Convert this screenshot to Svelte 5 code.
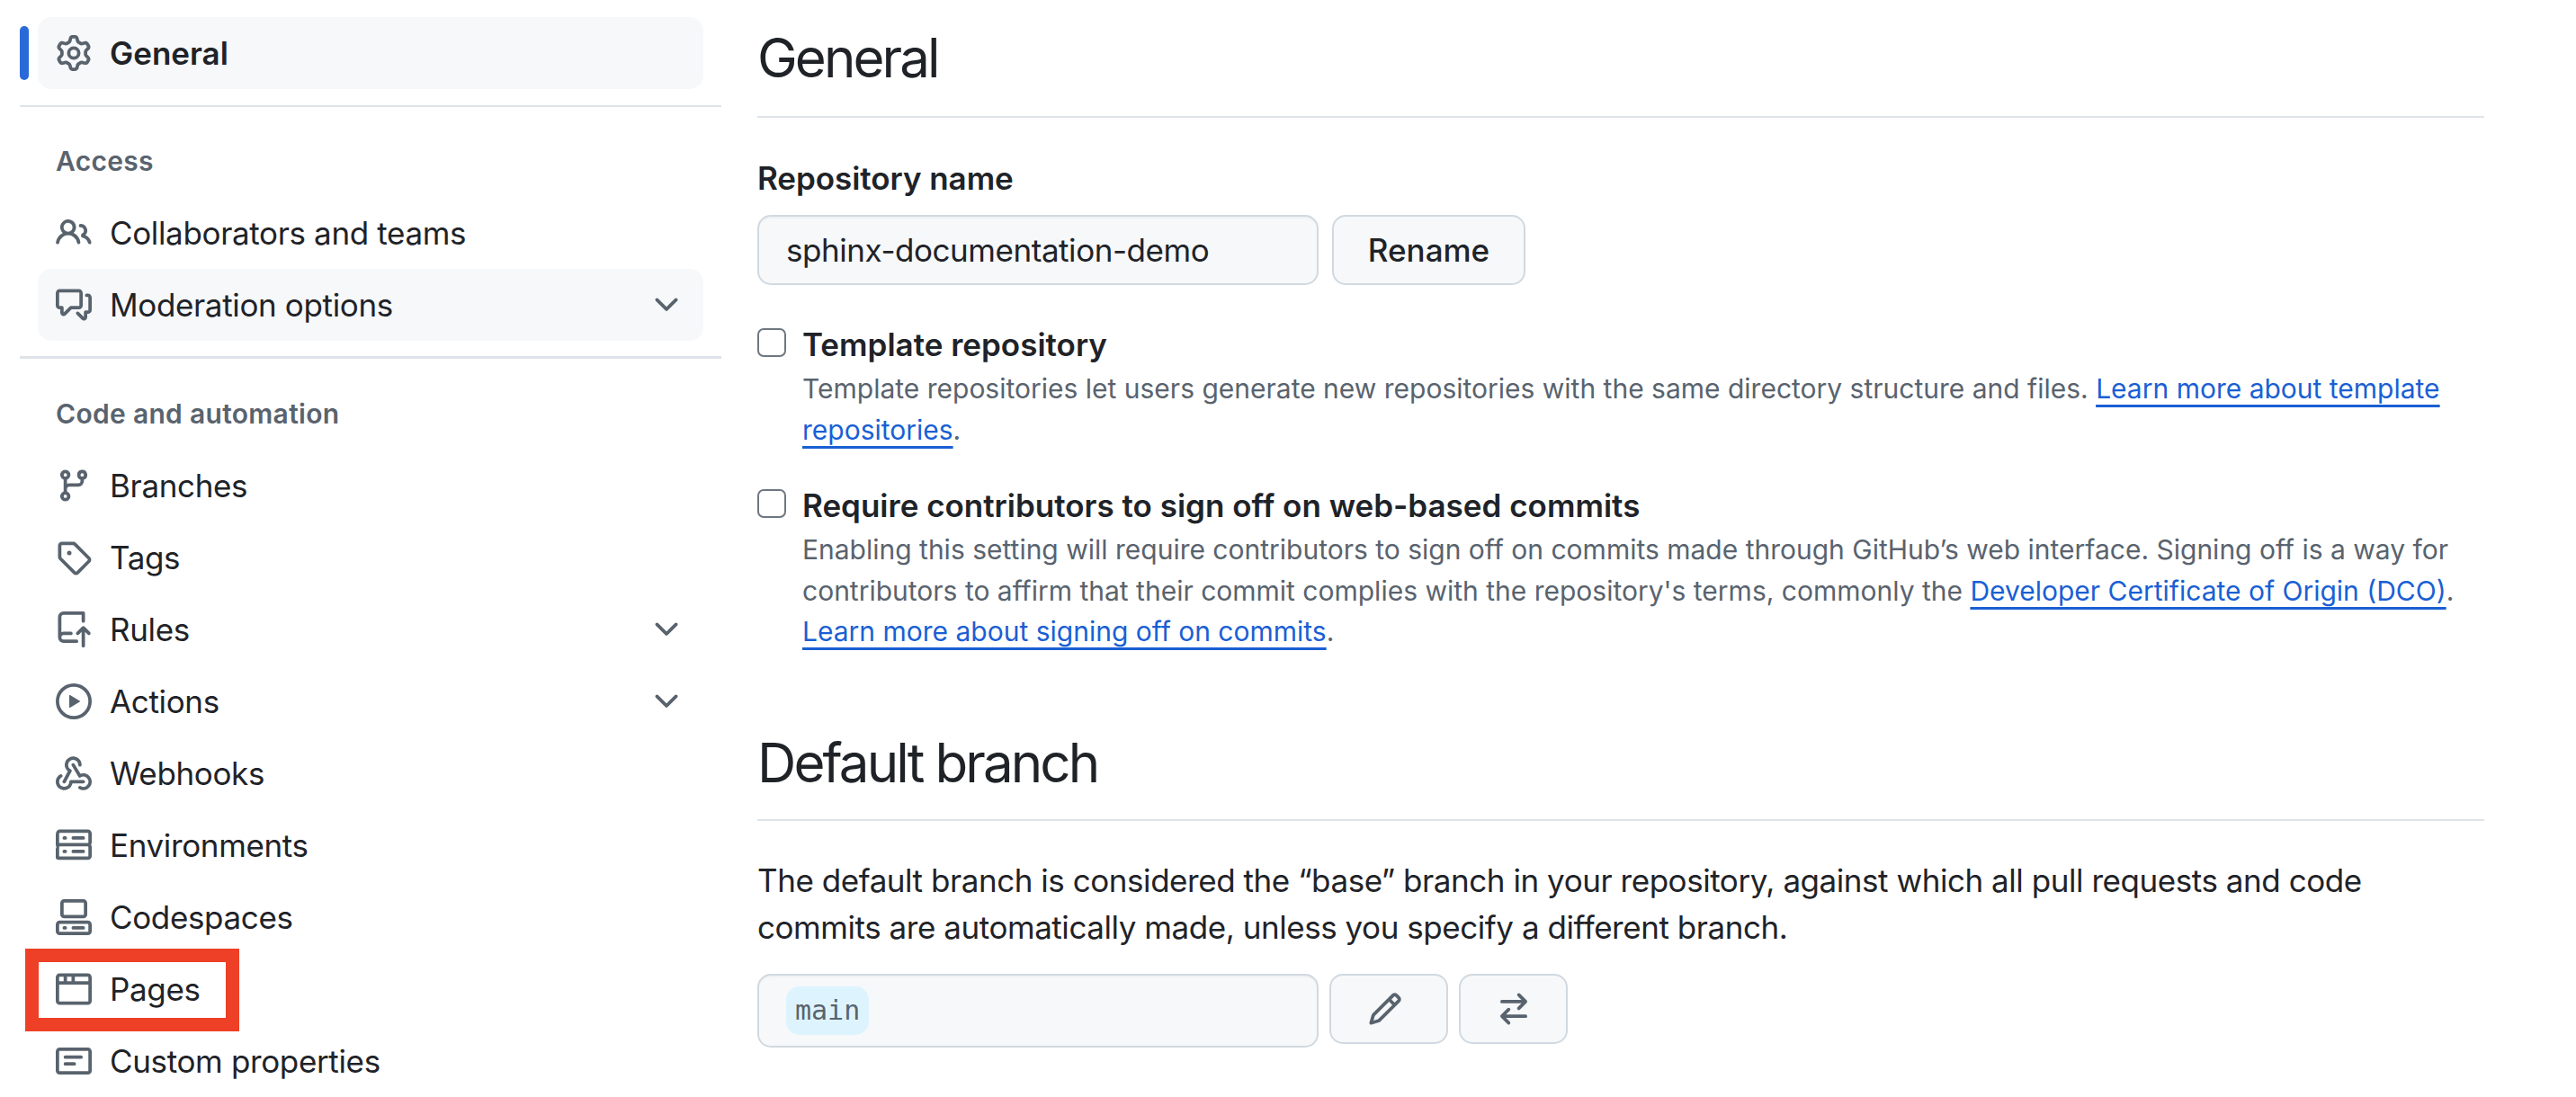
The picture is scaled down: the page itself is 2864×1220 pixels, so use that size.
<script lang="ts">
	const icons: Record<string, string> = {
		gear: 'M8 0a8.2 8.2 0 0 1 .701.031C9.444.095 9.99.645 10.16 1.29l.288 1.107c.018.066.079.158.212.224.231.114.454.243.668.386.123.082.233.09.299.071l1.103-.303c.644-.176 1.392.021 1.82.63.27.385.506.792.704 1.218.315.675.111 1.422-.364 1.891l-.814.806c-.049.048-.098.147-.088.294.016.257.016.515 0 .772-.01.147.038.246.088.294l.814.806c.475.469.679 1.216.364 1.891a7.977 7.977 0 0 1-.704 1.217c-.428.61-1.176.807-1.82.63l-1.102-.302c-.067-.019-.177-.011-.3.071a5.909 5.909 0 0 1-.668.386c-.133.066-.194.158-.211.224l-.29 1.106c-.168.646-.715 1.196-1.458 1.26a8.006 8.006 0 0 1-1.402 0c-.743-.064-1.289-.614-1.458-1.26l-.289-1.106c-.018-.066-.079-.158-.212-.224a5.738 5.738 0 0 1-.668-.386c-.123-.082-.233-.09-.299-.071l-1.103.303c-.644.176-1.392-.021-1.82-.63a8.12 8.12 0 0 1-.704-1.218c-.315-.675-.111-1.422.363-1.891l.815-.806c.05-.048.098-.147.088-.294a6.214 6.214 0 0 1 0-.772c.01-.147-.038-.246-.088-.294l-.815-.806C.635 6.045.431 5.298.746 4.623a7.92 7.92 0 0 1 .704-1.217c.428-.61 1.176-.807 1.82-.63l1.102.302c.067.019.177.011.3-.071.214-.143.437-.272.668-.386.133-.066.194-.158.211-.224l.29-1.106C6.009.645 6.556.095 7.299.03 7.53.01 7.764 0 8 0Zm-.571 1.525c-.036.003-.108.036-.137.146l-.289 1.105c-.147.561-.549.967-.998 1.189-.173.086-.34.183-.5.29-.417.278-.97.423-1.529.27l-1.103-.303c-.109-.03-.175.016-.195.045-.22.312-.412.644-.573.99-.014.031-.021.11.059.19l.815.806c.411.406.562.957.53 1.456a4.709 4.709 0 0 0 0 .582c.032.499-.119 1.05-.53 1.456l-.815.806c-.081.08-.073.159-.059.19.162.346.353.677.573.989.02.03.085.076.195.046l1.102-.303c.56-.153 1.113-.008 1.53.27.161.107.328.204.501.29.447.222.85.629.997 1.189l.289 1.105c.029.109.101.143.137.146a6.6 6.6 0 0 0 1.142 0c.036-.003.108-.036.137-.146l.289-1.105c.147-.561.549-.967.998-1.189.173-.086.34-.183.5-.29.417-.278.97-.423 1.529-.27l1.103.303c.109.029.175-.016.195-.045.22-.313.411-.644.573-.99.014-.031.021-.11-.059-.19l-.815-.806c-.411-.406-.562-.957-.53-1.456a4.709 4.709 0 0 0 0-.582c-.032-.499.119-1.05.53-1.456l.815-.806c.081-.08.073-.159.059-.19a6.464 6.464 0 0 0-.573-.989c-.02-.03-.085-.076-.195-.046l-1.102.303c-.56.153-1.113.008-1.53-.27a4.44 4.44 0 0 0-.501-.29c-.447-.222-.85-.629-.997-1.189l-.289-1.105c-.029-.11-.101-.143-.137-.146a6.6 6.6 0 0 0-1.142 0ZM11 8a3 3 0 1 1-6 0 3 3 0 0 1 6 0ZM9.5 8a1.5 1.5 0 1 0-3.001.001A1.5 1.5 0 0 0 9.5 8Z',
		people: 'M2 5.5a3.5 3.5 0 1 1 5.898 2.549 5.508 5.508 0 0 1 3.034 4.084.75.75 0 1 1-1.482.235 4 4 0 0 0-7.9 0 .75.75 0 0 1-1.482-.236A5.507 5.507 0 0 1 3.102 8.05 3.493 3.493 0 0 1 2 5.5ZM11 4a3.001 3.001 0 0 1 2.22 5.018 5.01 5.01 0 0 1 2.56 3.012.749.749 0 0 1-.885.954.752.752 0 0 1-.549-.514 3.507 3.507 0 0 0-2.522-2.372.75.75 0 0 1-.574-.73v-.352a.75.75 0 0 1 .416-.672A1.5 1.5 0 0 0 11 5.5.75.75 0 0 1 11 4Zm-5.5-.5a2 2 0 1 0-.001 3.999A2 2 0 0 0 5.5 3.5Z',
		comments: 'M1.75 1h8.5c.966 0 1.75.784 1.75 1.75v5.5A1.75 1.75 0 0 1 10.25 10H7.061l-2.574 2.573A1.458 1.458 0 0 1 2 11.543V10h-.25A1.75 1.75 0 0 1 0 8.25v-5.5C0 1.784.784 1 1.75 1ZM1.5 2.75v5.5c0 .138.112.25.25.25h1a.75.75 0 0 1 .75.75v2.19l2.72-2.72a.749.749 0 0 1 .53-.22h3.5a.25.25 0 0 0 .25-.25v-5.5a.25.25 0 0 0-.25-.25h-8.5a.25.25 0 0 0-.25.25Zm13 2a.25.25 0 0 0-.25-.25h-.5a.75.75 0 0 1 0-1.5h.5c.966 0 1.75.784 1.75 1.75v5.5A1.75 1.75 0 0 1 14.25 12H14v1.543a1.458 1.458 0 0 1-2.487 1.03L9.22 12.28a.749.749 0 0 1 .326-1.275.749.749 0 0 1 .734.215l2.22 2.22v-2.19a.75.75 0 0 1 .75-.75h1a.25.25 0 0 0 .25-.25Z',
		branch: 'M9.5 3.25a2.25 2.25 0 1 1 3 2.122V6A2.5 2.5 0 0 1 10 8.5H6a1 1 0 0 0-1 1v1.128a2.251 2.251 0 1 1-1.5 0V5.372a2.25 2.25 0 1 1 1.5 0v1.836A2.493 2.493 0 0 1 6 7h4a1 1 0 0 0 1-1v-.628A2.25 2.25 0 0 1 9.5 3.25Zm-6 0a.75.75 0 1 0 1.5 0 .75.75 0 0 0-1.5 0Zm8.25-.75a.75.75 0 1 0 0 1.5.75.75 0 0 0 0-1.5ZM4.25 12a.75.75 0 1 0 0 1.5.75.75 0 0 0 0-1.5Z',
		tag: 'M1 7.775V2.75C1 1.784 1.784 1 2.75 1h5.025c.464 0 .91.184 1.238.513l6.25 6.25a1.75 1.75 0 0 1 0 2.474l-5.026 5.026a1.75 1.75 0 0 1-2.474 0l-6.25-6.25A1.752 1.752 0 0 1 1 7.775Zm1.5 0c0 .066.026.13.073.177l6.25 6.25a.25.25 0 0 0 .354 0l5.025-5.025a.25.25 0 0 0 0-.354l-6.25-6.25a.25.25 0 0 0-.177-.073H2.75a.25.25 0 0 0-.25.25ZM6 5a1 1 0 1 1 0 2 1 1 0 0 1 0-2Z',
		push: 'M1 2.5A2.5 2.5 0 0 1 3.5 0h8.75a.75.75 0 0 1 .75.75v3.5a.75.75 0 0 1-1.5 0V1.5h-8a1 1 0 0 0-1 1v6.708A2.493 2.493 0 0 1 3.5 9h3.25a.75.75 0 0 1 0 1.5H3.5a1 1 0 0 0 0 2h5.75a.75.75 0 0 1 0 1.5H3.5A2.5 2.5 0 0 1 1 11.5Zm13.23 7.79h-.001l-1.224-1.224v6.184a.75.75 0 0 1-1.5 0V9.066L10.28 10.29a.75.75 0 0 1-1.06-1.061l2.505-2.504a.75.75 0 0 1 1.06 0L15.29 9.23a.751.751 0 0 1-.018 1.042.751.751 0 0 1-1.042.018Z',
		play: 'M8 0a8 8 0 1 1 0 16A8 8 0 0 1 8 0ZM1.5 8a6.5 6.5 0 1 0 13 0 6.5 6.5 0 0 0-13 0Zm4.879-2.773 4.264 2.559a.25.25 0 0 1 0 .428l-4.264 2.559A.25.25 0 0 1 6 10.559V5.442a.25.25 0 0 1 .379-.215Z',
		webhook: 'M5.5 4.25a2.25 2.25 0 0 1 4.5 0 .75.75 0 0 0 1.5 0 3.75 3.75 0 1 0-6.14 2.889l-2.272 4.258a.75.75 0 0 0 1.324.706L7 7.25a.75.75 0 0 0-.309-1.016A2.25 2.25 0 0 1 5.5 4.25ZM7.364 3.607a.75.75 0 0 1 1.03.257l2.608 4.349a3.75 3.75 0 1 1-.628 6.785.75.75 0 0 1 .752-1.299 2.25 2.25 0 1 0-.033-3.88.75.75 0 0 1-1.03-.256L7.107 4.636a.75.75 0 0 1 .257-1.03ZM2.9 8.776A.75.75 0 0 1 2.625 9.8 2.25 2.25 0 1 0 6 11.75a.75.75 0 0 1 .75-.751h5.5a.75.75 0 0 1 0 1.5H7.425a3.751 3.751 0 1 1-5.55-3.998.75.75 0 0 1 1.024.274Z',
		server: 'M1.75 1h12.5c.966 0 1.75.784 1.75 1.75v4c0 .372-.116.717-.314 1 .198.283.314.628.314 1v4a1.75 1.75 0 0 1-1.75 1.75H1.75A1.75 1.75 0 0 1 0 13.75v-4c0-.372.116-.717.314-1a1.739 1.739 0 0 1-.314-1v-4C0 1.784.784 1 1.75 1ZM1.5 2.75v4c0 .138.112.25.25.25h12.5a.25.25 0 0 0 .25-.25v-4a.25.25 0 0 0-.25-.25H1.75a.25.25 0 0 0-.25.25Zm.25 5.75a.25.25 0 0 0-.25.25v4c0 .138.112.25.25.25h12.5a.25.25 0 0 0 .25-.25v-4a.25.25 0 0 0-.25-.25ZM7 4.75A.75.75 0 0 1 7.75 4h4.5a.75.75 0 0 1 0 1.5h-4.5A.75.75 0 0 1 7 4.75ZM7.75 10h4.5a.75.75 0 0 1 0 1.5h-4.5a.75.75 0 0 1 0-1.5ZM3 4.75A.75.75 0 0 1 3.75 4h.5a.75.75 0 0 1 0 1.5h-.5A.75.75 0 0 1 3 4.75ZM3.75 10h.5a.75.75 0 0 1 0 1.5h-.5a.75.75 0 0 1 0-1.5Z',
		codespaces: 'M0 11.25c0-.966.784-1.75 1.75-1.75h12.5c.966 0 1.75.784 1.75 1.75v3A1.75 1.75 0 0 1 14.25 16H1.75A1.75 1.75 0 0 1 0 14.25Zm2-9.5C2 .784 2.784 0 3.75 0h8.5C13.216 0 14 .784 14 1.75v5a1.75 1.75 0 0 1-1.75 1.75h-8.5A1.75 1.75 0 0 1 2 6.75Zm1.75-.25a.25.25 0 0 0-.25.25v5c0 .138.112.25.25.25h8.5a.25.25 0 0 0 .25-.25v-5a.25.25 0 0 0-.25-.25Zm-2 9.5a.25.25 0 0 0-.25.25v3c0 .138.112.25.25.25h12.5a.25.25 0 0 0 .25-.25v-3a.25.25 0 0 0-.25-.25ZM7 12.75a.75.75 0 0 1 .75-.75h4.5a.75.75 0 0 1 0 1.5h-4.5a.75.75 0 0 1-.75-.75Zm-4 0a.75.75 0 0 1 .75-.75h.5a.75.75 0 0 1 0 1.5h-.5a.75.75 0 0 1-.75-.75Z',
		browser: 'M0 2.75C0 1.784.784 1 1.75 1h12.5c.966 0 1.75.784 1.75 1.75v10.5A1.75 1.75 0 0 1 14.25 15H1.75A1.75 1.75 0 0 1 0 13.25ZM14.5 6h-13v7.25c0 .138.112.25.25.25h12.5a.25.25 0 0 0 .25-.25Zm-6-3.5v2h6V2.75a.25.25 0 0 0-.25-.25ZM5 2.5v2h2v-2Zm-3.25 0a.25.25 0 0 0-.25.25V4.5h2v-2Z',
		note: 'M0 3.75C0 2.784.784 2 1.75 2h12.5c.966 0 1.75.784 1.75 1.75v8.5A1.75 1.75 0 0 1 14.25 14H1.75A1.75 1.75 0 0 1 0 12.25Zm1.75-.25a.25.25 0 0 0-.25.25v8.5c0 .138.112.25.25.25h12.5a.25.25 0 0 0 .25-.25v-8.5a.25.25 0 0 0-.25-.25ZM3.5 6.25a.75.75 0 0 1 .75-.75h7a.75.75 0 0 1 0 1.5h-7a.75.75 0 0 1-.75-.75Zm.75 2.25h4a.75.75 0 0 1 0 1.5h-4a.75.75 0 0 1 0-1.5Z',
		chevron: 'M12.78 5.22a.749.749 0 0 1 0 1.06l-4.25 4.25a.749.749 0 0 1-1.06 0L3.22 6.28a.749.749 0 1 1 1.06-1.06L8 8.939l3.72-3.719a.749.749 0 0 1 1.06 0Z',
		pencil: 'M11.013 1.427a1.75 1.75 0 0 1 2.474 0l1.086 1.086a1.75 1.75 0 0 1 0 2.474l-8.61 8.61c-.21.21-.47.364-.756.445l-3.251.93a.75.75 0 0 1-.927-.928l.929-3.25c.081-.286.235-.547.445-.758l8.61-8.61Zm.176 4.823L9.75 4.81l-6.286 6.287a.253.253 0 0 0-.064.108l-.558 1.953 1.953-.558a.253.253 0 0 0 .108-.064Zm1.238-3.763a.25.25 0 0 0-.354 0L10.811 3.75l1.439 1.44 1.263-1.263a.25.25 0 0 0 0-.354Z',
		swap: 'M5.22 14.78a.75.75 0 0 0 1.06-1.06L4.56 12h8.69a.75.75 0 0 0 0-1.5H4.56l1.72-1.72a.75.75 0 0 0-1.06-1.06l-3 3a.75.75 0 0 0 0 1.06l3 3Zm5.56-6.5a.75.75 0 1 1-1.06-1.06l1.72-1.72H2.75a.75.75 0 0 1 0-1.5h8.69L9.72 2.28a.75.75 0 0 1 1.06-1.06l3 3a.75.75 0 0 1 0 1.06l-3 3Z'
	};

	const access = [
		{ label: 'Collaborators and teams', icon: 'people' },
		{ label: 'Moderation options', icon: 'comments', more: true, hover: true }
	];

	const code = [
		{ label: 'Branches', icon: 'branch' },
		{ label: 'Tags', icon: 'tag' },
		{ label: 'Rules', icon: 'push', more: true },
		{ label: 'Actions', icon: 'play', more: true },
		{ label: 'Webhooks', icon: 'webhook' },
		{ label: 'Environments', icon: 'server' },
		{ label: 'Codespaces', icon: 'codespaces' },
		{ label: 'Pages', icon: 'browser' },
		{ label: 'Custom properties', icon: 'note' }
	];
</script>

{#snippet icon(name: string)}
	<svg class="icon" viewBox="0 0 16 16" aria-hidden="true"><path d={icons[name]} /></svg>
{/snippet}

{#snippet navRow(item: { label: string; icon: string; more?: boolean; hover?: boolean })}
	<a class="nav-row" class:filled={item.hover} href="#top">
		{@render icon(item.icon)}
		<span class="nav-label">{item.label}</span>
		{#if item.more}
			<span class="chev">{@render icon('chevron')}</span>
		{/if}
	</a>
{/snippet}

<div class="page">
	<nav class="sidebar">
		<div class="current-wrap">
			<span class="current-bar"></span>
			<a class="nav-row filled current" href="#top">
				{@render icon('gear')}
				<span class="nav-label">General</span>
			</a>
		</div>
		<hr class="side-rule" />
		<div class="side-head first">Access</div>
		{#each access as item}
			{@render navRow(item)}
		{/each}
		<hr class="side-rule second" />
		<div class="side-head">Code and automation</div>
		{#each code as item}
			{@render navRow(item)}
		{/each}
		<div class="callout"></div>
	</nav>

	<main class="content">
		<h2 class="title">General</h2>
		<label class="field-label" for="repo">Repository name</label>
		<div class="rename-row">
			<input id="repo" class="text-input" value="sphinx-documentation-demo" />
			<button class="btn">Rename</button>
		</div>

		<div class="check-row">
			<input type="checkbox" class="check" />
			<div>
				<div class="check-title">Template repository</div>
				<p class="note">
					Template repositories let users generate new repositories with the same directory structure and files. <a href="#top">Learn more about template<br />repositories</a>.
				</p>
			</div>
		</div>

		<div class="check-row next">
			<input type="checkbox" class="check" />
			<div>
				<div class="check-title">Require contributors to sign off on web-based commits</div>
				<p class="note">
					Enabling this setting will require contributors to sign off on commits made through GitHub’s web interface. Signing off is a way for<br />
					contributors to affirm that their commit complies with the repository's terms, commonly the <a href="#top">Developer Certificate of Origin (DCO)</a>.<br />
					<a href="#top">Learn more about signing off on commits</a>.
				</p>
			</div>
		</div>

		<h2 class="title branch-title">Default branch</h2>
		<p class="lead">
			The default branch is considered the “base” branch in your repository, against which all pull requests and code<br />
			commits are automatically made, unless you specify a different branch.
		</p>
		<div class="branch-row">
			<div class="text-input branch-box"><code class="pill">main</code></div>
			<button class="btn icon-btn pencil">{@render icon('pencil')}</button>
			<button class="btn icon-btn swap">{@render icon('swap')}</button>
		</div>
	</main>
</div>

<style>
	:global(body) {
		margin: 0;
		background: #fff;
		overflow: hidden;
	}

	.page {
		display: flex;
		width: 2864px;
		height: 1220px;
		overflow: hidden;
		font-family: Inter, 'Liberation Sans', sans-serif;
		font-size: 35px;
		color: #1f2328;
	}

	.sidebar {
		position: relative;
		flex: none;
		box-sizing: border-box;
		width: 780px;
		margin-left: 22px;
		padding-top: 19px;
	}

	.current-wrap {
		position: relative;
	}

	.current-bar {
		position: absolute;
		left: 0;
		top: 10px;
		width: 10px;
		height: 60px;
		border-radius: 5px;
		background: #2a6ad8;
	}

	.nav-row {
		display: flex;
		align-items: center;
		box-sizing: border-box;
		height: 80px;
		margin: 0 20px 0 20px;
		padding: 0 21px 0 20px;
		border-radius: 15px;
		color: #1f2328;
		text-decoration: none;
	}

	.filled {
		background: #f6f8fa;
	}

	.current .nav-label {
		font-weight: 600;
		letter-spacing: 0;
	}

	.icon {
		display: block;
		flex: none;
		width: 40px;
		height: 40px;
		fill: #59636e;
	}

	.nav-label {
		margin-left: 20px;
		letter-spacing: -0.35px;
	}

	.chev {
		margin-left: auto;
	}

	.side-rule {
		height: 2px;
		margin: 18px 0 0;
		border: 0;
		background: #dfe4ea;
	}

	.side-rule.second {
		margin-top: 17px;
		height: 3px;
	}

	.side-head {
		display: flex;
		align-items: center;
		height: 80px;
		margin-top: 21px;
		padding-left: 40px;
		font-size: 30px;
		font-weight: 600;
		letter-spacing: 0.3px;
		color: #59636e;
	}

	.side-head.first {
		margin-top: 20px;
	}

	/* red annotation drawn on top of the Pages row */
	.callout {
		position: absolute;
		left: 6px;
		top: 1055px;
		box-sizing: border-box;
		width: 238px;
		height: 92px;
		border: 15px solid #ee4026;
	}

	.content {
		flex: none;
		width: 1920px;
		margin-left: 40px;
		padding-top: 27px;
	}

	.title {
		margin: 0;
		padding-bottom: 27px;
		border-bottom: 2px solid #dfe4ea;
		font-size: 60px;
		font-weight: 400;
		line-height: 75px;
		letter-spacing: -2.9px;
	}

	.field-label {
		display: block;
		margin-top: 41px;
		font-weight: 600;
		line-height: 52px;
		letter-spacing: -0.05px;
	}

	.rename-row {
		display: flex;
		gap: 15px;
		margin-top: 15px;
	}

	.text-input {
		box-sizing: border-box;
		width: 624px;
		height: 78px;
		padding: 0 30px;
		border: 2.5px solid #d1d9e0;
		border-radius: 15px;
		background: #f6f8fa;
		box-shadow: inset 0 2px 0 rgba(31, 35, 40, 0.03);
		font: inherit;
		color: #1f2328;
		letter-spacing: -0.45px;
		outline: none;
	}

	.btn {
		box-sizing: border-box;
		height: 78px;
		padding: 0;
		width: 215px;
		border: 2.5px solid #d1d9e0;
		border-radius: 15px;
		background: #f6f8fa;
		font: inherit;
		font-weight: 500;
		color: #1f2328;
	}

	.check-row {
		display: flex;
		margin-top: 40px;
	}

	.check-row.next {
		margin-top: 35px;
	}

	.check {
		flex: none;
		appearance: none;
		box-sizing: border-box;
		width: 32px;
		height: 32px;
		margin: 8px 18px 0 0;
		border: 2.5px solid #6e7781;
		border-radius: 7px;
		background: #fff;
	}

	.check-title {
		font-weight: 600;
		line-height: 52px;
	}

	.note {
		margin: 1px 0 0;
		font-size: 30px;
		line-height: 45.5px;
		color: #59636e;
		white-space: nowrap;
	}

	.note a {
		color: #1a5fd4;
		text-decoration: underline;
		text-decoration-thickness: 2.5px;
		text-underline-offset: 7px;
	}

	.branch-title {
		margin-top: 85px;
		padding-bottom: 25px;
	}

	.lead {
		margin: 40px 0 0;
		line-height: 52.5px;
		letter-spacing: -0.45px;
		white-space: nowrap;
	}

	.branch-row {
		display: flex;
		align-items: flex-start;
		margin-top: 25px;
	}

	.branch-box {
		display: flex;
		align-items: center;
		height: 82px;
	}

	.pill {
		padding: 7px 10px;
		border-radius: 15px;
		background: #ddf4ff;
		font-family: 'DejaVu Sans Mono', monospace;
		font-size: 30px;
		line-height: 40px;
		color: #59636e;
		letter-spacing: 0;
	}

	.icon-btn {
		display: flex;
		align-items: center;
		justify-content: center;
	}

	.pencil {
		width: 132px;
		margin-left: 12px;
		padding-right: 8px;
	}

	.swap {
		width: 121px;
		margin-left: 12px;
	}
</style>
